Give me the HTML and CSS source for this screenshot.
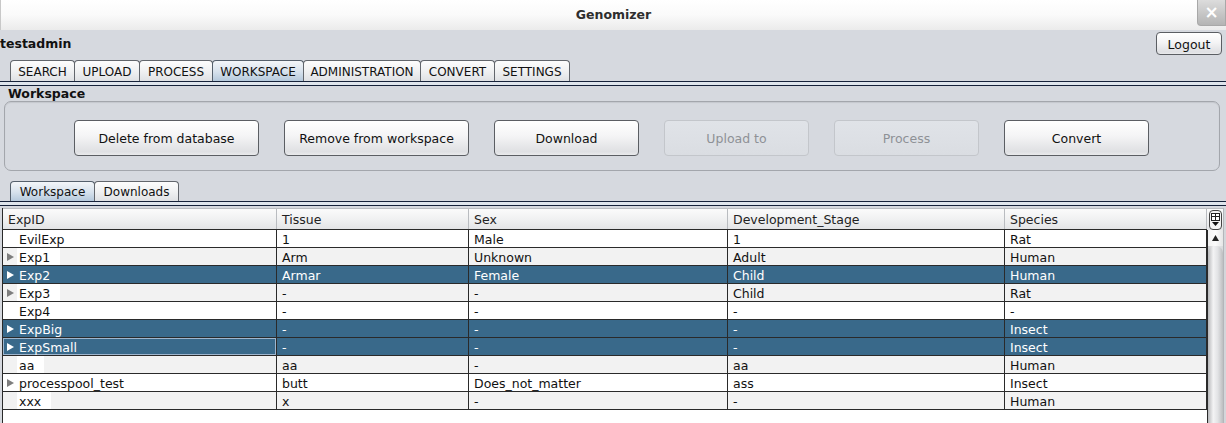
FILE: index.html
```html
<!DOCTYPE html>
<html>
<head>
<meta charset="utf-8">
<link rel="stylesheet" href="styles.css">
</head>
<body>
<div class="window">
  <div class="titlebar">
    <span class="title">Genomizer</span>
    <div class="close">×</div>
  </div>
  <div class="userbar">
    <span class="user">testadmin</span>
    <button class="btn logout">Logout</button>
  </div>
  <div class="tabs main-tabs">
    <div class="tab">SEARCH</div>
    <div class="tab">UPLOAD</div>
    <div class="tab">PROCESS</div>
    <div class="tab selected">WORKSPACE</div>
    <div class="tab">ADMINISTRATION</div>
    <div class="tab">CONVERT</div>
    <div class="tab">SETTINGS</div>
  </div>
  <div class="tabline"></div>
  <div class="section-label">Workspace</div>
  <div class="panel">
    <button class="btn action wide">Delete from database</button>
    <button class="btn action wide">Remove from workspace</button>
    <button class="btn action">Download</button>
    <button class="btn action disabled">Upload to</button>
    <button class="btn action disabled">Process</button>
    <button class="btn action">Convert</button>
  </div>
  <div class="tabs sub-tabs">
    <div class="tab selected">Workspace</div>
    <div class="tab">Downloads</div>
  </div>
  <div class="tabline"></div>
  <div class="table-area">
    <div class="table">
      <div class="row header">
        <div class="cell c1">ExpID</div>
        <div class="cell c2">Tissue</div>
        <div class="cell c3">Sex</div>
        <div class="cell c4">Development_Stage</div>
        <div class="cell c5">Species</div>
      </div>
      <div class="row">
        <div class="cell c1 tree"><span class="noarrow"></span><span class="label">EvilExp</span></div>
        <div class="cell c2">1</div><div class="cell c3">Male</div><div class="cell c4">1</div><div class="cell c5">Rat</div>
      </div>
      <div class="row alt">
        <div class="cell c1 tree"><span class="arrow"></span><span class="label">Exp1</span></div>
        <div class="cell c2">Arm</div><div class="cell c3">Unknown</div><div class="cell c4">Adult</div><div class="cell c5">Human</div>
      </div>
      <div class="row sel">
        <div class="cell c1 tree"><span class="arrow"></span><span class="label">Exp2</span></div>
        <div class="cell c2">Armar</div><div class="cell c3">Female</div><div class="cell c4">Child</div><div class="cell c5">Human</div>
      </div>
      <div class="row alt">
        <div class="cell c1 tree"><span class="arrow"></span><span class="label">Exp3</span></div>
        <div class="cell c2">-</div><div class="cell c3">-</div><div class="cell c4">Child</div><div class="cell c5">Rat</div>
      </div>
      <div class="row">
        <div class="cell c1 tree"><span class="noarrow"></span><span class="label">Exp4</span></div>
        <div class="cell c2">-</div><div class="cell c3">-</div><div class="cell c4">-</div><div class="cell c5">-</div>
      </div>
      <div class="row sel">
        <div class="cell c1 tree"><span class="arrow"></span><span class="label">ExpBig</span></div>
        <div class="cell c2">-</div><div class="cell c3">-</div><div class="cell c4">-</div><div class="cell c5">Insect</div>
      </div>
      <div class="row sel">
        <div class="cell c1 tree focus"><span class="arrow"></span><span class="label">ExpSmall</span></div>
        <div class="cell c2">-</div><div class="cell c3">-</div><div class="cell c4">-</div><div class="cell c5">Insect</div>
      </div>
      <div class="row alt">
        <div class="cell c1 tree"><span class="noarrow"></span><span class="label">aa</span></div>
        <div class="cell c2">aa</div><div class="cell c3">-</div><div class="cell c4">aa</div><div class="cell c5">Human</div>
      </div>
      <div class="row">
        <div class="cell c1 tree"><span class="arrow"></span><span class="label">processpool_test</span></div>
        <div class="cell c2">butt</div><div class="cell c3">Does_not_matter</div><div class="cell c4">ass</div><div class="cell c5">Insect</div>
      </div>
      <div class="row alt">
        <div class="cell c1 tree"><span class="noarrow"></span><span class="label">xxx</span></div>
        <div class="cell c2">x</div><div class="cell c3">-</div><div class="cell c4">-</div><div class="cell c5">Human</div>
      </div>
      <div class="filler"></div>
    </div>
    <div class="vscroll">
      <div class="corner">
        <svg width="13" height="20" viewBox="0 0 13 20">
          <rect x="0.5" y="0.5" width="12" height="19" rx="3.5" fill="#f4f4f4" stroke="#444"/>
          <rect x="2.5" y="3.5" width="8" height="7" fill="#fff" stroke="#222"/>
          <line x1="2.5" y1="6.5" x2="10.5" y2="6.5" stroke="#222"/>
          <line x1="6.5" y1="3.5" x2="6.5" y2="10.5" stroke="#222"/>
          <polygon points="3,12 10,12 6.5,16" fill="#111"/>
        </svg>
      </div>
      <div class="track">
        <div class="up"><svg width="7" height="6" viewBox="0 0 7 6"><polygon points="3.5,0 7,6 0,6" fill="#222"/></svg></div>
        <div class="thumb"></div>
      </div>
    </div>
    <div class="edge"></div>
  </div>
</div>
</body>
</html>
```

FILE: styles.css
```css
* { box-sizing: border-box; }
html, body { margin: 0; padding: 0; }
body {
  width: 1226px;
  height: 423px;
  overflow: hidden;
  background: #d6d9df;
  font-family: "DejaVu Sans", Verdana, sans-serif;
  font-size: 12.5px;
  color: #111;
}
.window { width: 1226px; height: 423px; display: flex; flex-direction: column; }

.titlebar {
  height: 30px;
  flex: none;
  position: relative;
  display: flex;
  align-items: center;
  justify-content: center;
  background: linear-gradient(#ffffff, #fafafa 50%, #ebebeb);
  border-left: 1px solid #c8c8c8;
}
.title { font-weight: bold; font-size: 12.5px; color: #2e2e2e; margin-top: -1px; }
.close {
  position: absolute;
  right: 0;
  top: 0;
  width: 29px;
  height: 26px;
  background: linear-gradient(#dcdcdc, #b4b4b4);
  border: 1px solid #a8a8a8;
  border-top: none;
  border-radius: 0 0 0 4px;
  color: #fff;
  font-weight: bold;
  font-size: 17px;
  line-height: 24px;
  text-align: center;
}

.userbar {
  height: 30px;
  flex: none;
  display: flex;
  align-items: flex-start;
  justify-content: space-between;
  padding-right: 4px;
}
.user { font-weight: bold; font-size: 12.5px; margin-top: 6px; line-height: 15px; color: #111; }

.btn {
  font-family: "DejaVu Sans", Verdana, sans-serif;
  font-size: 12.5px;
  color: #111;
  border: 1px solid #5b5e63;
  border-radius: 4px;
  background: linear-gradient(#ffffff, #f4f4f5 45%, #dfe0e3 90%, #e9eaec);
  padding: 1px 0 0 0;
}
.logout { width: 66px; height: 23px; margin-top: 2px; }

.tabs { display: flex; flex: none; height: 21px; }
.main-tabs { padding-left: 10px; }
.sub-tabs { padding-left: 10px; height: 20px; margin-top: 10px; }
.tab {
  border: 1px solid #62666c;
  border-bottom: none;
  border-radius: 4px 4px 0 0;
  margin-right: -1px;
  padding-top: 1px;
  line-height: 20px;
  text-align: center;
  background: linear-gradient(#fdfdfd, #f0f1f2 50%, #dfe1e4);
  color: #111;
  font-size: 12px;
}
.main-tabs .tab:nth-child(1) { width: 65px; }
.main-tabs .tab:nth-child(2) { width: 66px; }
.main-tabs .tab:nth-child(3) { width: 74px; }
.main-tabs .tab:nth-child(4) { width: 92px; }
.main-tabs .tab:nth-child(5) { width: 118px; }
.main-tabs .tab:nth-child(6) { width: 75px; }
.main-tabs .tab:nth-child(7) { width: 76px; }
.sub-tabs .tab { line-height: 19px; width: 85px; }
.tab.selected {
  background: linear-gradient(#f3f6f9, #d6e1ec 55%, #b5c9dc);
  border-color: #55606c;
}

.tabline {
  height: 5px;
  flex: none;
  border-top: 1px solid #16223a;
  border-bottom: 1px solid #16223a;
  background: #dfe5ec;
}

.section-label {
  font-weight: bold;
  font-size: 12.5px;
  padding-left: 8px;
  height: 15px;
  line-height: 15px;
  flex: none;
}
.panel {
  flex: none;
  margin: 0 6px 0 4px;
  height: 70px;
  border: 1px solid #a3a6ac;
  border-radius: 7px;
  box-shadow: inset 0 1px 1px rgba(0,0,0,0.08);
  display: flex;
  align-items: flex-start;
  gap: 25px;
  padding: 18px 0 0 69px;
}
.action { width: 145px; height: 36px; }
.action.wide { width: 185px; }
.action.disabled {
  border-color: #c3c6cb;
  background: linear-gradient(#e0e3e8, #dadde2);
  color: #8e9196;
}

.table-area {
  flex: 1;
  display: flex;
  margin-top: 2px;
  padding-left: 2px;
  min-height: 0;
}
.table {
  width: 1205px;
  flex: none;
  background: #fff;
  border-left: 1px solid #2a2a2a;
  display: flex;
  flex-direction: column;
}
.row {
  display: flex;
  height: 18px;
  border-bottom: 1px solid #2a2a2a;
  background: #fff;
  flex: none;
}
.row.alt { background: #f2f2f2; }
.row.sel { background: #39698a; color: #fff; }
.row.header {
  height: 22px;
  border-top: 1px solid #b9bcc0;
  background: linear-gradient(#fbfbfb, #eeeff0 60%, #e3e4e6);
}
.cell {
  border-right: 1px solid #2a2a2a;
  padding-left: 5px;
  height: 17px;
  line-height: 19px;
  white-space: nowrap;
  overflow: hidden;
  flex: none;
}
.header .cell { border-right-color: #b9bcc0; height: 20px; line-height: 22px; color: #222; }
.c1 { width: 274px; }
.c2 { width: 192px; }
.c3 { width: 259px; }
.c4 { width: 277px; }
.c5 { width: 202px; }
.tree { display: flex; align-items: stretch; padding-left: 0; }
.arrow, .noarrow { width: 14px; flex: none; position: relative; }
.arrow::before {
  content: "";
  position: absolute;
  left: 4px;
  top: 5px;
  border-left: 7px solid #7e7e7e;
  border-top: 4px solid transparent;
  border-bottom: 4px solid transparent;
}
.sel .arrow::before { border-left-color: #fff; }
.label { background: #fff; padding: 0 10px 0 2px; }
.sel .label { background: transparent; }
.focus { box-shadow: inset 0 0 0 1px #9fb6ce; }
.filler { flex: 1; background: #fff; }

.vscroll {
  width: 16px;
  flex: none;
  display: flex;
  flex-direction: column;
}
.corner {
  height: 22px;
  flex: none;
  background: linear-gradient(#fbfbfb, #e3e4e6);
  border-top: 1px solid #b9bcc0;
  padding: 1px 0 0 2px;
}
.corner svg { display: block; }
.track {
  flex: 1;
  background: linear-gradient(90deg, #c9cacc, #eeeeef 40%, #d9dadc);
  display: flex;
  flex-direction: column;
  border-left: 1px solid #2a2a2a;
}
.up { height: 16px; padding: 5px 0 0 4px; flex: none; background: linear-gradient(90deg, #f2f2f2, #fbfbfb 50%, #e6e6e6); }
.up svg { display: block; }
.thumb {
  flex: 1;
  border-radius: 7px 7px 0 0;
  background: linear-gradient(90deg, #b7b8ba, #f3f3f4 35%, #e2e3e5 65%, #bdbec0);
}
.edge { flex: 1; background: #d4d6da; border-left: 1px solid #b4b6ba; }
```
